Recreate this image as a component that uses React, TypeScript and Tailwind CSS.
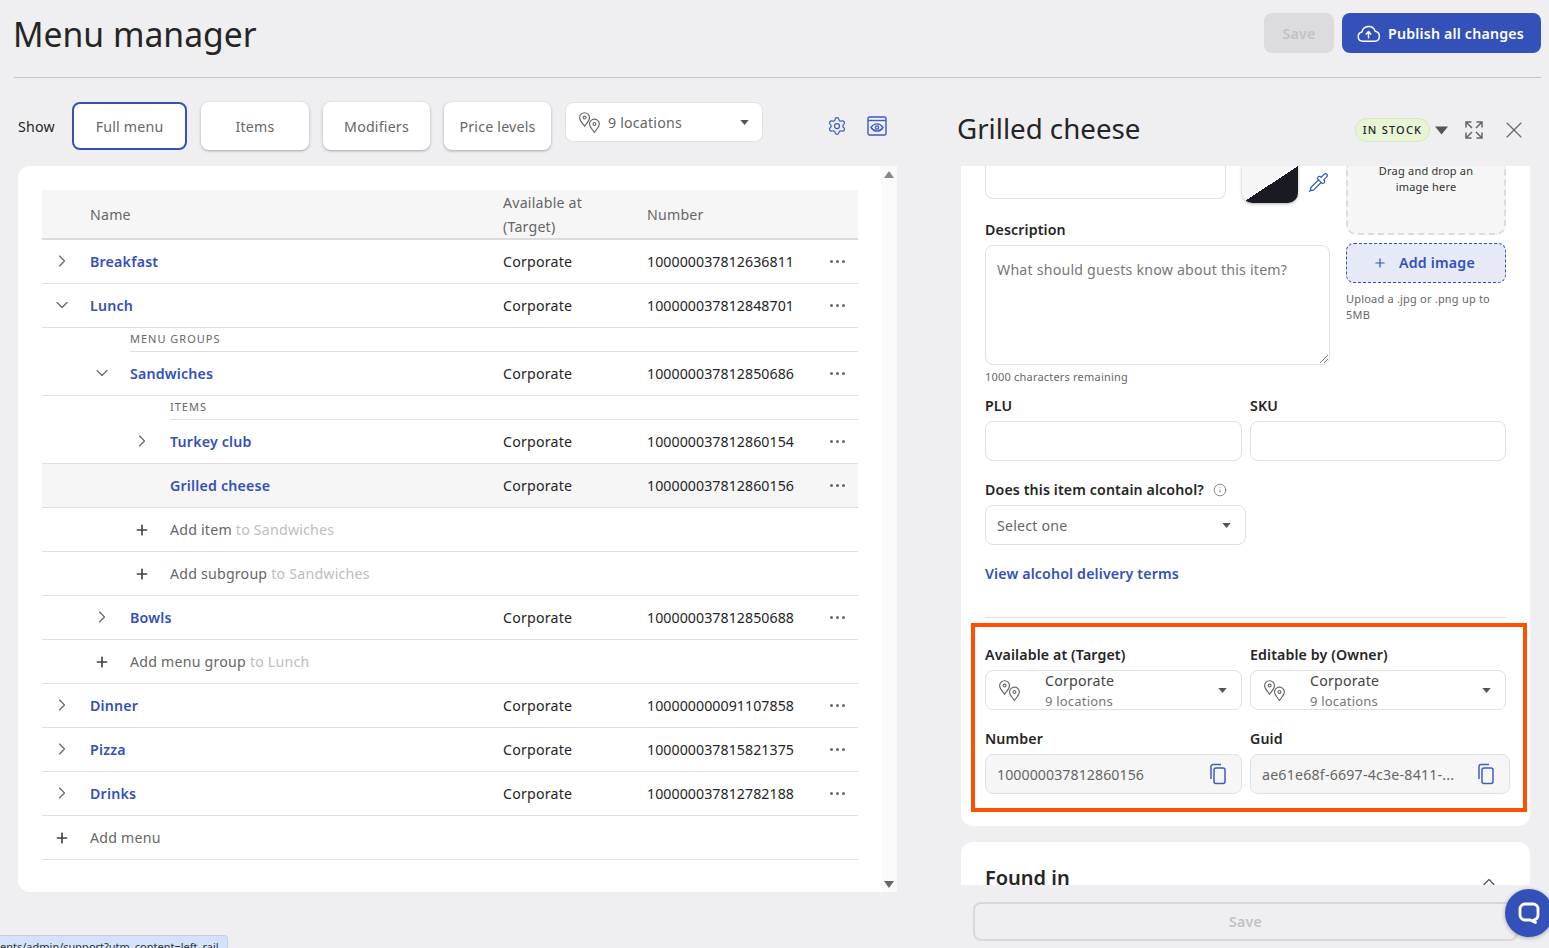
import React from "react";
import { ChevronRight, ChevronDown, ChevronUp, Plus, Settings, Pipette, X, Info } from "lucide-react";

const Pins = ({ className = "" }: { className?: string }) => (
  <svg viewBox="0 0 20 20" className={className} fill="none" stroke="#666" strokeWidth="1.100">
    <path d="M5.300.700a4.700 4.700 0 0 1 4.700 4.700c0 3-2.700 5.100-4.700 8.100C3.300 10.500.600 8.400.600 5.400A4.700 4.700 0 0 1 5.300.700Z" />
    <circle cx="5.300" cy="5.300" r="1.400" />
    <path d="M14.700 6.800a4.700 4.700 0 0 1 4.700 4.700c0 3-2.700 4.800-4.700 8-2-3.200-4.700-5-4.700-8a4.700 4.700 0 0 1 4.700-4.700Z" fill="#fff" />
    <circle cx="14.700" cy="11.400" r="1.400" />
  </svg>
);

const Caret = ({ className = "" }: { className?: string }) => (
  <svg viewBox="0 0 10 6" className={className}><path d="M0 0h10L5 6z" fill="#555" /></svg>
);

const Copy = () => (
  <svg viewBox="0 0 20 22" className="w-[20px] h-[22px]" fill="none" stroke="#3f5bc4" strokeWidth="1.500">
    <rect x="6" y="5" width="11" height="15.500" rx="2" />
    <path d="M3 16V3.500A2 2 0 0 1 5 1.500h8" />
  </svg>
);

const Preview = () => (
  <svg viewBox="0 0 20 20" className="w-[20px] h-[20px]" fill="none" stroke="#3f5bc4" strokeWidth="1.400">
    <rect x="1" y="1" width="18" height="18" rx="1.500" />
    <path d="M1 4.500h18" />
    <path d="M4 11.500c1.800-2.600 3.800-3.600 6-3.600s4.200 1 6 3.600c-1.800 2.600-3.800 3.600-6 3.600s-4.200-1-6-3.600Z" />
    <circle cx="10" cy="11.500" r="1.600" />
  </svg>
);

const Expand = () => (
  <svg viewBox="0 0 18 18" className="w-[18px] h-[18px]" fill="none" stroke="#666" strokeWidth="1.500">
    <path d="M1 6.500V1h5.500M1 1l6 6M17 6.500V1h-5.500M17 1l-6 6M1 11.500V17h5.500M1 17l6-6M17 11.500V17h-5.500M17 17l-6-6" />
  </svg>
);

const Cloud = () => (
  <svg viewBox="0 0 24 24" className="w-[25px] h-[25px]" fill="none" stroke="#fff" strokeWidth="1.400" strokeLinejoin="round" strokeLinecap="round">
    <path d="M6.500 19.500a4.500 4.500 0 0 1-.8-8.900A6.600 6.600 0 0 1 18.400 9.800a4.900 4.900 0 0 1-.4 9.700Z" />
    <path d="M12 16v-5.500M9.800 12.500 12 10.200l2.200 2.300" />
  </svg>
);

const Dots = () => (
  <div className="flex gap-[3px] w-[16px]">
    <span className="w-[3px] h-[3px] rounded-full bg-[#666]" />
    <span className="w-[3px] h-[3px] rounded-full bg-[#666]" />
    <span className="w-[3px] h-[3px] rounded-full bg-[#666]" />
  </div>
);

type RowProps = { name: string; num: string; indent: string; icon?: "right" | "down"; bg?: string };

const Row = ({ name, num, indent, icon, bg = "" }: RowProps) => (
  <div className={`flex items-center h-[44px] border-b border-[#e0e0e0] ${bg}`}>
    <div className={`flex items-center w-[461px] ${indent}`}>
      <div className="w-[48px] pl-[10px] shrink-0">
        {icon === "right" && <ChevronRight className="w-[20px] h-[20px] text-[#666]" strokeWidth={1.400} />}
        {icon === "down" && <ChevronDown className="w-[20px] h-[20px] text-[#666]" strokeWidth={1.400} />}
      </div>
      <span className="font-semibold tracking-[0.2px] text-[#3350bb]">{name}</span>
    </div>
    <div className="w-[144px] text-[#252525]">Corporate</div>
    <div className="w-[183px] tracking-[0.05px] text-[#252525]">{num}</div>
    <Dots />
  </div>
);

const Label = ({ text }: { text: string }) => (
  <div className="h-[24px] flex items-center border-b border-[#e0e0e0] text-[11px] tracking-[1px] text-[#666]">{text}</div>
);

const AddRow = ({ action, target, indent }: { action: string; target?: string; indent: string }) => (
  <div className={`flex items-center h-[44px] border-b border-[#e0e0e0] ${indent}`}>
    <div className="w-[48px] pl-[12px] shrink-0">
      <Plus className="w-[16px] h-[16px] text-[#444]" strokeWidth={2.500} />
    </div>
    <span className="text-[#666]">{action}</span>
    {target && <span className="text-[#bdbdbd] ml-[4px]">{target}</span>}
  </div>
);

const Tab = ({ text, width, active }: { text: string; width: string; active?: boolean }) => (
  <div className={`h-[48px] ${width} flex items-center justify-center pt-[2px] rounded-[8px] bg-white text-[#666] ${active ? "border-2 border-[#3350bb]" : "shadow-[0_1px_3px_rgba(0,0,0,0.3)]"}`}>
    {text}
  </div>
);

const FieldLabel = ({ text }: { text: string }) => (
  <div className="font-semibold tracking-[0.12px] text-[#252525] h-[20px] leading-[20px]">{text}</div>
);

const LocSelect = () => (
  <div className="mt-[5px] h-[40px] flex items-center rounded-[8px] border border-[#e0e0e0] bg-white pl-[13px] pr-[14px]">
    <Pins className="w-[21px] h-[21px] shrink-0" />
    <div className="ml-[25px] pt-[2px] flex-1 flex flex-col leading-[20px]">
      <span className="text-[#444]">Corporate</span>
      <span className="text-[13px] text-[#777]">9 locations</span>
    </div>
    <Caret className="w-[9px] h-[5px]" />
  </div>
);

export default function App() {
  return (
    <div className="relative w-full h-[948px] overflow-hidden bg-[#efeff1] text-[14.200px] tracking-[0.2px] text-[#252525] font-['Noto_Sans',sans-serif]">
      <header className="ml-[14px] mr-[8px] h-[78px] flex items-start justify-between border-b border-[#c4c4c4]">
        <h1 className="text-[33.700px] tracking-normal leading-[42px] mt-[13px] ml-[-1px] text-[#252525]">Menu manager</h1>
        <div className="flex gap-[8px] mt-[13px]">
          <div className="w-[70px] h-[40px] pt-[2px] rounded-[8px] bg-[#dcdcde] text-[#c2c2c2] font-semibold flex items-center justify-center">Save</div>
          <div className="w-[199px] h-[40px] pt-[1px] pr-[3px] rounded-[8px] bg-[#3451ba] text-white font-semibold flex items-center justify-center gap-[7px]">
            <Cloud />
            <span className="pt-[1px]">Publish all changes</span>
          </div>
        </div>
      </header>

      <div className="flex">
        <div className="ml-[18px] w-[879px] shrink-0">
          <div className="mt-[24px] h-[48px] flex items-start">
            <div className="w-[54px] h-[48px] pt-[2px] flex items-center text-[#252525]">Show</div>
            <div className="flex gap-[14px]">
              <Tab text="Full menu" width="w-[115px]" active />
              <Tab text="Items" width="w-[108px]" />
              <Tab text="Modifiers" width="w-[107px]" />
              <Tab text="Price levels" width="w-[107px]" />
            </div>
            <div className="ml-[14px] w-[198px] h-[40px] rounded-[8px] border border-[#e0e0e0] bg-white flex items-center pl-[13px] pr-[13px]">
              <Pins className="w-[21px] h-[21px] shrink-0" />
              <span className="ml-[8px] pt-[2px] flex-1 text-[#666]">9 locations</span>
              <Caret className="w-[9px] h-[5px]" />
            </div>
            <div className="ml-[64px] mt-[14px] flex items-center gap-[20px]">
              <Settings className="w-[20px] h-[20px] text-[#3f5bc4]" strokeWidth={1.500} />
              <Preview />
            </div>
          </div>

          <div className="mt-[16px] h-[726px] flex rounded-tl-[12px] rounded-bl-[12px] bg-white overflow-hidden">
            <div className="flex-1 pl-[24px] pr-[23px] pt-[24px]">
              <div className="flex items-center h-[50px] pt-[2px] bg-[#f6f6f6] border-b-2 border-[#dcdcdc] text-[#666]">
                <div className="w-[461px] pl-[48px]">Name</div>
                <div className="w-[144px] leading-[24px]">Available at<br />(Target)</div>
                <div>Number</div>
              </div>
              <Row name="Breakfast" num="100000037812636811" indent="" icon="right" />
              <Row name="Lunch" num="100000037812848701" indent="" icon="down" />
              <div className="pl-[88px]"><Label text="MENU GROUPS" /></div>
              <Row name="Sandwiches" num="100000037812850686" indent="pl-[40px]" icon="down" />
              <div className="pl-[128px]"><Label text="ITEMS" /></div>
              <Row name="Turkey club" num="100000037812860154" indent="pl-[80px]" icon="right" />
              <Row name="Grilled cheese" num="100000037812860156" indent="pl-[80px]" bg="bg-[#f6f6f6]" />
              <AddRow action="Add item" target="to Sandwiches" indent="pl-[80px]" />
              <AddRow action="Add subgroup" target="to Sandwiches" indent="pl-[80px]" />
              <Row name="Bowls" num="100000037812850688" indent="pl-[40px]" icon="right" />
              <AddRow action="Add menu group" target="to Lunch" indent="pl-[40px]" />
              <Row name="Dinner" num="100000000091107858" indent="" icon="right" />
              <Row name="Pizza" num="100000037815821375" indent="" icon="right" />
              <Row name="Drinks" num="100000037812782188" indent="" icon="right" />
              <AddRow action="Add menu" indent="" />
            </div>
            <div className="w-[16px] bg-[#fafafa] flex flex-col items-center justify-between pt-[5px] pb-[4px]">
              <svg viewBox="0 0 10 7" className="w-[10px] h-[7px]"><path d="M0 7h10L5 0z" fill="#888" /></svg>
              <svg viewBox="0 0 10 7" className="w-[10px] h-[7px]"><path d="M0 0h10L5 7z" fill="#666" /></svg>
            </div>
          </div>
        </div>

        <div className="ml-[61px] w-[572px] shrink-0">
          <div className="h-[88px] flex items-start">
            <h2 className="text-[27.700px] tracking-normal leading-[36px] mt-[32px] ml-[-1px] text-[#252525]">Grilled cheese</h2>
            <div className="ml-auto mr-[2px] mt-[38px] flex items-center">
              <div className="w-[75px] h-[24px] rounded-full bg-[#e7f5d6] border border-[#d5e8c0] flex items-center justify-center text-[11px] font-medium tracking-[1.200px] text-[#252525]">IN STOCK</div>
              <Caret className="ml-[5px] w-[13px] h-[9px]" />
              <div className="ml-[17px]"><Expand /></div>
              <X className="ml-[17px] w-[28px] h-[28px] text-[#666]" strokeWidth={1} />
            </div>
          </div>

          <div className="ml-[3px] w-[569px] h-[660px] bg-white rounded-b-[12px] px-[24px] overflow-hidden">
            <div className="flex">
              <div className="w-[345px] shrink-0">
                <div className="flex items-start">
                  <div className="w-[241px] h-[33px] rounded-b-[8px] border border-t-0 border-[#e0e0e0]" />
                  <div className="ml-[16px] w-[56px] h-[37px] rounded-b-[10px] shadow-[0_1px_3px_rgba(0,0,0,0.3)] bg-[linear-gradient(to_bottom_right,#f6f6f6_50%,#1a1b22_50%)]" />
                  <Pipette className="ml-[10px] mt-[6px] w-[21px] h-[21px] text-[#3f5bc4]" strokeWidth={1.500} />
                </div>
                <div className="mt-[17px]"><FieldLabel text="Description" /></div>
                <div className="relative mt-[5px] h-[120px] rounded-[8px] border border-[#e0e0e0] px-[11px] py-[13px] text-[#777]">
                  What should guests know about this item?
                  <svg viewBox="0 0 9 9" className="absolute right-[1px] bottom-[1px] w-[9px] h-[9px]" stroke="#777" strokeWidth="1"><path d="M9 1 1 9M9 5 5 9" /></svg>
                </div>
                <div className="mt-[4px] text-[11px] leading-[16px] text-[#666]">1000 characters remaining</div>
              </div>
              <div className="ml-[16px] w-[160px] shrink-0">
                <div className="h-[69px] flex flex-col rounded-b-[10px] border-2 border-t-0 border-dashed border-[#dcdcdc] bg-[#f6f6f6] text-[11px] leading-[16px] text-center px-[24px] text-[#333]">
                  <div className="mt-[-3px]">Drag and drop an image here</div>
                </div>
                <div className="mt-[8px] h-[40px] pr-[4px] rounded-[8px] border border-dashed border-[#3350bb] bg-[#e6eaf7] flex items-center justify-center gap-[12px] font-semibold text-[#3350bb]">
                  <Plus className="w-[14px] h-[14px]" strokeWidth={2} />
                  Add image
                </div>
                <div className="mt-[8px] text-[11px] leading-[16px] text-[#666]">Upload a .jpg or .png up to 5MB</div>
              </div>
            </div>

            <div className="mt-[11px] grid grid-cols-[257px_256px] gap-x-[8px]">
              <div>
                <FieldLabel text="PLU" />
                <div className="mt-[5px] h-[40px] rounded-[8px] border border-[#e0e0e0]" />
              </div>
              <div>
                <FieldLabel text="SKU" />
                <div className="mt-[5px] h-[40px] rounded-[8px] border border-[#e0e0e0]" />
              </div>
            </div>

            <div className="mt-[19px] flex items-center gap-[9px]">
              <FieldLabel text="Does this item contain alcohol?" />
              <Info className="w-[14px] h-[14px] text-[#666]" strokeWidth={1.300} />
            </div>
            <div className="mt-[5px] w-[261px] h-[40px] rounded-[8px] border border-[#e0e0e0] flex items-center pl-[11px] pr-[14px]">
              <span className="flex-1 pt-[2px] text-[#666]">Select one</span>
              <Caret className="w-[9px] h-[5px]" />
            </div>
            <div className="mt-[19px] h-[20px] leading-[20px] font-semibold tracking-[0.15px] text-[#3350bb]">View alcohol delivery terms</div>
            <div className="mt-[33px] h-px bg-[#e0e0e0] w-[521px]" />

            <div className="mt-[5px] ml-[-14px] w-[556px] h-[189px] border-[4px] border-[#ff4f00] pl-[10px] pt-[18px]">
              <div className="grid grid-cols-[257px_256px] gap-x-[8px]">
                <div>
                  <FieldLabel text="Available at (Target)" />
                  <LocSelect />
                </div>
                <div>
                  <FieldLabel text="Editable by (Owner)" />
                  <LocSelect />
                </div>
              </div>
              <div className="mt-[19px] grid grid-cols-[257px_260px] gap-x-[8px]">
                <div>
                  <FieldLabel text="Number" />
                  <div className="mt-[5px] h-[40px] rounded-[8px] border border-[#e0e0e0] bg-[#f6f6f6] flex items-center pl-[11px] pr-[13px] text-[#666]">
                    <span className="flex-1 pt-[2px] tracking-[0.05px]">100000037812860156</span>
                    <Copy />
                  </div>
                </div>
                <div>
                  <FieldLabel text="Guid" />
                  <div className="mt-[5px] h-[40px] rounded-[8px] border border-[#e0e0e0] bg-[#f6f6f6] flex items-center pl-[11px] pr-[13px] text-[#666]">
                    <span className="flex-1 pt-[2px] truncate">ae61e68f-6697-4c3e-8411-...</span>
                    <Copy />
                  </div>
                </div>
              </div>
            </div>
          </div>

          <div className="ml-[3px] mt-[16px] w-[569px] h-[43px] bg-white rounded-t-[12px] px-[24px] flex overflow-hidden">
            <div className="text-[20px] tracking-normal font-semibold leading-[28px] mt-[22px] text-[#252525]">Found in</div>
            <ChevronUp className="ml-auto mr-[7px] mt-[30px] w-[20px] h-[20px] text-[#555]" strokeWidth={1.500} />
          </div>
          <div className="ml-[15px] mt-[17px] w-[545px] h-[39px] rounded-[8px] border-2 border-[#d8d8da] flex items-center justify-center font-semibold text-[#c2c2c2]">Save</div>
        </div>
      </div>

      <div className="absolute left-0 bottom-0 w-[228px] h-[13px] overflow-hidden rounded-tr-[4px] bg-[#d3e3fd] border-t border-r border-[#c5cfe0] text-[11px] tracking-normal leading-[14px] pt-[4px] text-[#333] whitespace-nowrap">
        ents/admin/support?utm_content=left_rail
      </div>
      <div className="absolute left-[1505px] top-[889px] w-[48px] h-[48px] rounded-full bg-[#3451ba] shadow-[0_1px_4px_rgba(0,0,0,0.3)] flex items-center justify-center">
        <svg viewBox="0 0 24 24" className="w-[24px] h-[24px]" fill="none" stroke="#fff" strokeWidth="2.800" strokeLinejoin="round">
          <path d="M8 3h8a5 5 0 0 1 5 5v6a5 5 0 0 1-4 4.900l1.500 2.600-5-2.500H8a5 5 0 0 1-5-5V8a5 5 0 0 1 5-5Z" />
        </svg>
      </div>
    </div>
  );
}
